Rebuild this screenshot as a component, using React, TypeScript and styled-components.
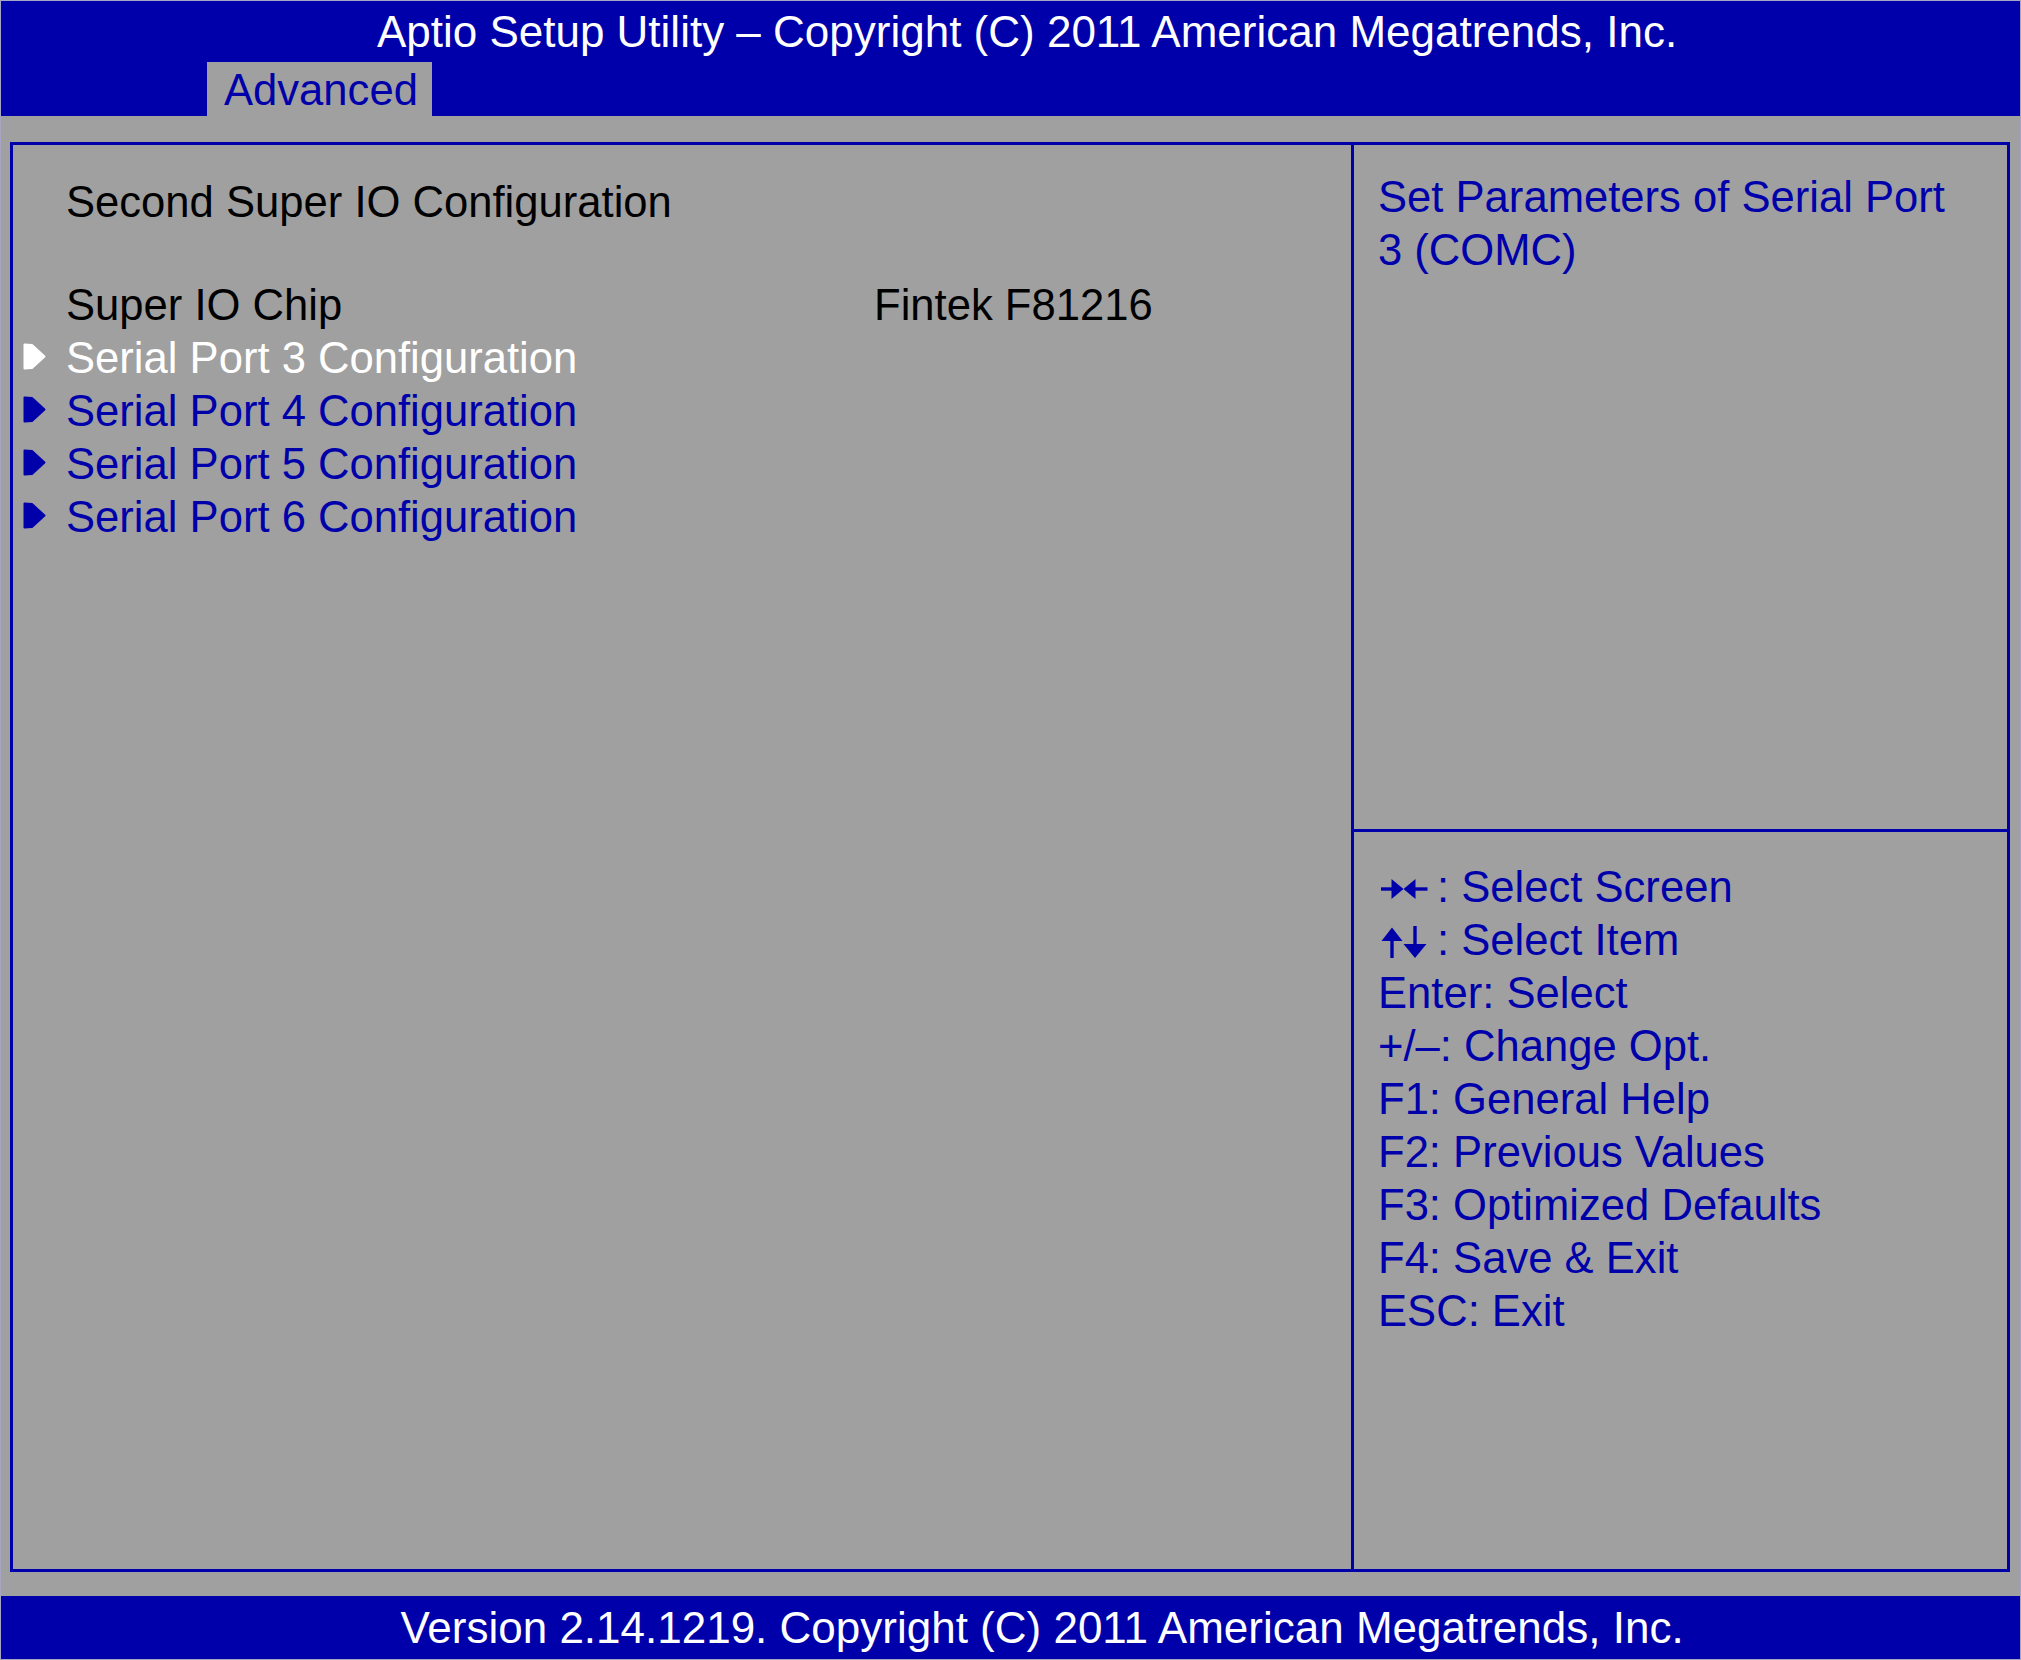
import React from 'react';
import styled, { createGlobalStyle } from 'styled-components';

const BLUE = '#0000aa';
const GRAY = '#a0a0a0';

const GlobalStyle = createGlobalStyle`
  html, body {
    margin: 0;
    padding: 0;
    background: ${GRAY};
  }
  * {
    box-sizing: border-box;
  }
`;

const Screen = styled.div`
  width: 2021px;
  height: 1660px;
  display: flex;
  flex-direction: column;
  overflow: hidden;
  border: 1px solid #a6a6c4;
  font-family: "Liberation Sans", Arial, sans-serif;
  font-size: 43.6px;
`;

const Header = styled.header`
  background: ${BLUE};
  height: 115px;
  display: flex;
  flex-direction: column;
`;

const Title = styled.div`
  height: 61px;
  line-height: 62px;
  padding-left: 33px;
  text-align: center;
  font-size: 44px;
  color: #ffffff;
  white-space: nowrap;
`;

const TabRow = styled.nav`
  height: 54px;
  display: flex;
  padding-left: 206px;
`;

const Tab = styled.div`
  background: ${GRAY};
  color: ${BLUE};
  width: 225px;
  line-height: 56px;
  padding-left: 17px;
  white-space: nowrap;
`;

const Body = styled.main`
  flex: 1;
  background: ${GRAY};
  padding: 26px 10px 24px 9px;
`;

const Frame = styled.div`
  height: 100%;
  border: 3px solid ${BLUE};
  display: grid;
  grid-template-columns: 1338px 1fr;
`;

const MainPanel = styled.section`
  padding-top: 31px;
  display: flex;
  flex-direction: column;
`;

const Row = styled.div<{ $color: string }>`
  display: grid;
  grid-template-columns: 53px 808px 1fr;
  height: 53px;
  line-height: 53px;
  color: ${p => p.$color};
  white-space: nowrap;
`;

const Spacer = styled.div`
  height: 50px;
`;

const Marker = styled.div`
  display: flex;
  align-items: center;
  padding-left: 10px;
  padding-bottom: 5px;
`;

const SideColumn = styled.aside`
  border-left: 3px solid ${BLUE};
  display: grid;
  grid-template-rows: 684px 1fr;
`;

const HelpBox = styled.div`
  padding: 26px 40px 0 24px;
  color: ${BLUE};
  line-height: 53px;
`;

const KeysBox = styled.div`
  border-top: 3px solid ${BLUE};
  padding: 29px 0 0 24px;
  color: ${BLUE};
`;

const KeyLine = styled.div`
  display: flex;
  align-items: center;
  height: 53px;
  white-space: nowrap;
`;

const KeyIcon = styled.svg`
  width: 48px;
  height: 34px;
  margin: 2px 9px 0 2px;
  flex-shrink: 0;
`;

const Footer = styled.footer`
  background: ${BLUE};
  height: 63px;
  line-height: 64px;
  padding-left: 63px;
  text-align: center;
  font-size: 44px;
  color: #ffffff;
  white-space: nowrap;
`;

const Triangle: React.FC<{ color: string }> = ({ color }) => (
  <svg width="23" height="27" viewBox="0 0 23 27">
    <polygon
      points="1.5,1.5 9,2 21.5,13.5 9,25 1.5,25.5"
      fill={color}
      stroke={color}
      strokeWidth="2"
      strokeLinejoin="round"
    />
  </svg>
);

const LeftRightIcon = () => (
  <KeyIcon viewBox="0 0 48 34">
    <rect x="1" y="15.3" width="12" height="3.4" fill={BLUE} />
    <polygon points="11.5,7 23.5,17 11.5,27" fill={BLUE} />
    <polygon points="35.5,7 23.5,17 35.5,27" fill={BLUE} />
    <rect x="34" y="15.3" width="13.5" height="3.4" fill={BLUE} />
  </KeyIcon>
);

const UpDownIcon = () => (
  <KeyIcon viewBox="0 0 48 34">
    <polygon points="1.5,16 12,2.5 22.5,16" fill={BLUE} />
    <rect x="10.3" y="14" width="3.4" height="19" fill={BLUE} />
    <rect x="33.3" y="1" width="3.4" height="19" fill={BLUE} />
    <polygon points="23.5,19 35,33 46.5,19" fill={BLUE} />
  </KeyIcon>
);

interface MenuItem {
  label: string;
  selected?: boolean;
}

const menuItems: MenuItem[] = [
  { label: 'Serial Port 3 Configuration', selected: true },
  { label: 'Serial Port 4 Configuration' },
  { label: 'Serial Port 5 Configuration' },
  { label: 'Serial Port 6 Configuration' },
];

const keyLines = [
  'Enter: Select',
  '+/\u2013: Change Opt.',
  'F1: General Help',
  'F2: Previous Values',
  'F3: Optimized Defaults',
  'F4: Save & Exit',
  'ESC: Exit',
];

const App: React.FC = () => {
  return (
    <>
      <GlobalStyle />
      <Screen>
        <Header>
          <Title>Aptio Setup Utility – Copyright (C) 2011 American Megatrends, Inc.</Title>
          <TabRow>
            <Tab>Advanced</Tab>
          </TabRow>
        </Header>

        <Body>
          <Frame>
            <MainPanel>
              <Row $color="#000000">
                <span />
                <span>Second Super IO Configuration</span>
              </Row>
              <Spacer />
              <Row $color="#000000">
                <span />
                <span>Super IO Chip</span>
                <span>Fintek F81216</span>
              </Row>
              {menuItems.map(item => {
                const color = item.selected ? '#ffffff' : BLUE;
                return (
                  <Row key={item.label} $color={color}>
                    <Marker>
                      <Triangle color={color} />
                    </Marker>
                    <span>{item.label}</span>
                  </Row>
                );
              })}
            </MainPanel>

            <SideColumn>
              <HelpBox>Set Parameters of Serial Port 3 (COMC)</HelpBox>
              <KeysBox>
                <KeyLine>
                  <LeftRightIcon />
                  : Select Screen
                </KeyLine>
                <KeyLine>
                  <UpDownIcon />
                  : Select Item
                </KeyLine>
                {keyLines.map(line => (
                  <KeyLine key={line}>{line}</KeyLine>
                ))}
              </KeysBox>
            </SideColumn>
          </Frame>
        </Body>

        <Footer>Version 2.14.1219. Copyright (C) 2011 American Megatrends, Inc.</Footer>
      </Screen>
    </>
  );
};

export default App;
